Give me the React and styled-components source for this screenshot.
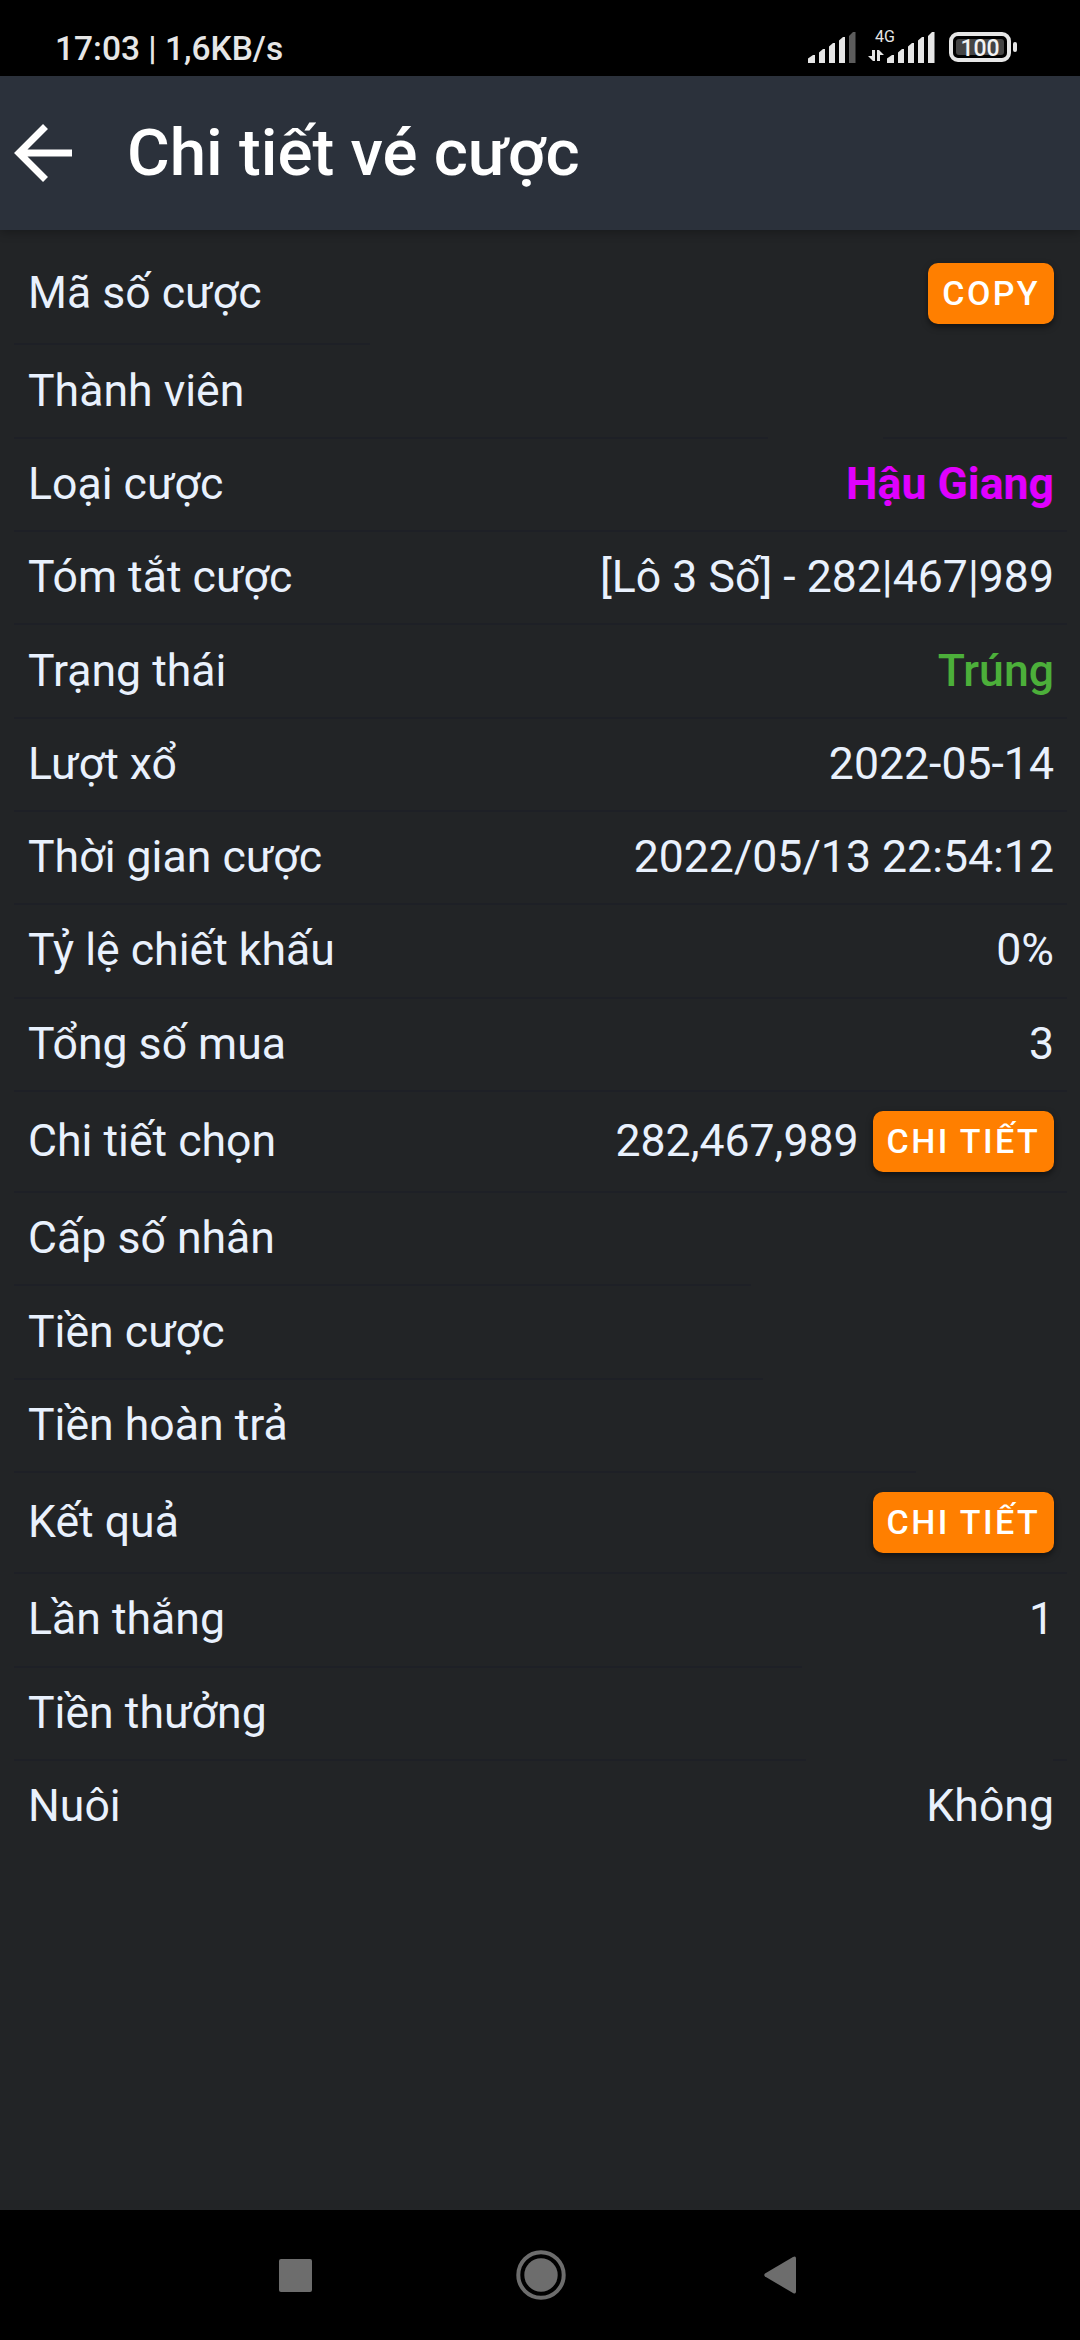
import React from 'react'
import styled, { createGlobalStyle } from 'styled-components'

const rows = [
    { label: 'Mã số cược', button: 'COPY', gap: [357, 1053] },
    { label: 'Thành viên', gap: [753, 868] },
    { label: 'Loại cược', value: 'Hậu Giang', color: '#e000ff', weight: 700 },
    { label: 'Tóm tắt cược', value: '[Lô 3 Số] - 282|467|989' },
    { label: 'Trạng thái', value: 'Trúng', color: '#4caf3a', weight: 500 },
    { label: 'Lượt xổ', value: '2022-05-14' },
    { label: 'Thời gian cược', value: '2022/05/13 22:54:12' },
    { label: 'Tỷ lệ chiết khấu', value: '0%' },
    { label: 'Tổng số mua', value: '3' },
    { label: 'Chi tiết chọn', value: '282,467,989', button: 'CHI TIẾT' },
    { label: 'Cấp số nhân', gap: [736, 1053] },
    { label: 'Tiền cược', gap: [748, 1053] },
    { label: 'Tiền hoàn trả', gap: [901, 1053] },
    { label: 'Kết quả', button: 'CHI TIẾT' },
    { label: 'Lần thắng', value: '1', gap: [787, 1052] },
    { label: 'Tiền thưởng', gap: [791, 1037] },
    { label: 'Nuôi', value: 'Không', last: true }
]

const Signal = ({ dim }) => (
    <SignalIcon viewBox="0 0 48 31" width="48" height="31">
        <path d="M0 31v-4.500l5-3.500h2v8z" />
        <path d="M11 31V20.500l4-3.500h2v14z" />
        <path d="M21 31V14.500l4-3.500h2v20z" />
        <path d="M31 31V8.500l4-3.500h2v26z" />
        <path d="M41 31V4l4-4h2.500v31z" opacity={dim ? 0.4 : 1} />
    </SignalIcon>
)

const StatusBar = () => (
    <Status>
        <Clock>17:03 | 1,6KB/s</Clock>
        <StatusIcons>
            <Signal dim />
            <Network>
                <span>4G</span>
                <svg viewBox="0 0 16 12" width="16" height="12">
                    <path d="M4 0h3v11H5L0 6h4zM9 11V0h2l5 5h-4v6z" />
                </svg>
            </Network>
            <Signal />
            <Battery><Charge>100</Charge></Battery>
            <BatteryTip />
        </StatusIcons>
    </Status>
)

export default function App() {
    return (
        <Screen>
            <GlobalStyle />
            <StatusBar />
            <Header>
                <svg viewBox="0 0 58 58" width="58" height="58" fill="none" stroke="#fff" strokeWidth="7">
                    <path d="M31.500 2.500L5 29l26.500 26.500M5 29h53" />
                </svg>
                <Title>Chi tiết vé cược</Title>
            </Header>
            <List>
                {rows.map(row => (
                    <Row key={row.label} $tall={row.button} $gap={row.gap} $last={row.last}>
                        <Label>{row.label}</Label>
                        {row.value && <Value $color={row.color} $weight={row.weight}>{row.value}</Value>}
                        {row.button && <Button>{row.button}</Button>}
                    </Row>
                ))}
            </List>
            <NavBar>
                <svg viewBox="0 0 33 33" width="33" height="33"><rect width="33" height="33" rx="2" /></svg>
                <HomeIcon viewBox="0 0 50 50" width="50" height="50">
                    <circle cx="25" cy="25" r="22.700" fill="none" stroke="#6d6d6d" strokeWidth="4" />
                    <circle cx="25" cy="25" r="16.700" />
                </HomeIcon>
                <svg viewBox="0 0 33 38" width="33" height="38">
                    <path d="M1 17.500L29 1q3-1.500 3 1.500v33q0 3-3 1.500L1 20.500q-1.500-1.500 0-3z" />
                </svg>
            </NavBar>
        </Screen>
    )
}

const GlobalStyle = createGlobalStyle`
    body {
        margin: 0;
        background: #000;
        font-family: Roboto, sans-serif;
    }
    * {
        box-sizing: border-box;
    }
    svg {
        display: block;
        flex: none;
    }
`
const Screen = styled.div`
    display: flex;
    flex-direction: column;
    width: 1080px;
    height: 2340px;
    background: #222426;
    overflow: hidden;
`
const Status = styled.div`
    display: flex;
    flex: none;
    justify-content: space-between;
    height: 76px;
    padding: 0 63px 0 55px;
    background: #000;
    color: #e6e6e6;
`
const Clock = styled.span`
    padding-top: 29px;
    font-size: 33.500px;
    font-weight: 500;
    line-height: 40px;
`
const StatusIcons = styled.div`
    display: flex;
    align-items: flex-end;
    padding-bottom: 13px;
`
const SignalIcon = styled.svg`
    fill: #e6e6e6;
`
const Network = styled.div`
    display: flex;
    flex-direction: column;
    width: 31px;
    height: 34px;
    padding-left: 12px;
    fill: #e6e6e6;
    font-size: 16px;
    line-height: 16px;

    span {
        margin-left: 7px;
        margin-bottom: 5px;
    }
`
const Battery = styled.div`
    width: 62px;
    height: 30px;
    margin-left: 14px;
    margin-bottom: 1px;
    padding: 3px;
    border: 4px solid #e6e6e6;
    border-radius: 9px;
`
const Charge = styled.div`
    height: 16px;
    border-radius: 3px;
    background: #444;
    color: #f2f2f2;
    font-size: 23px;
    font-weight: 500;
    line-height: 19px;
    text-align: center;
`
const BatteryTip = styled.div`
    width: 4px;
    height: 10px;
    margin: 0 0 11px 2px;
    border-radius: 2px;
    background: #e6e6e6;
`
const Header = styled.header`
    display: flex;
    flex: none;
    align-items: center;
    height: 154px;
    padding-left: 14px;
    background: #2b313b;
    box-shadow: 0 2px 10px rgba(0, 0, 0, 0.3);
`
const Title = styled.h1`
    margin: 0 0 0 55px;
    color: #fff;
    font-size: 65.400px;
    font-weight: 500;
    line-height: 76px;
`
const List = styled.main`
    flex: 1;
    padding: 14.200px 13px 0 14px;
`
const Row = styled.div`
    display: flex;
    align-items: center;
    height: ${prop => prop.$tall ? "101.300px" : "93.300px"};
    padding: 0 13px 0 14px;
    border-bottom: 2px solid #1e2026;
    ${prop => prop.$last && "border-bottom-color: transparent;"}
    ${prop => prop.$gap && `
        border-image: linear-gradient(to right, #1e2026 ${prop.$gap[0]}px, transparent ${prop.$gap[0]}px,
            transparent ${prop.$gap[1]}px, #1e2026 ${prop.$gap[1]}px) 2;
    `}
`
const Label = styled.span`
    margin-right: auto;
    padding-bottom: 1px;
    color: #e9f1fd;
    font-size: 44.600px;
    line-height: 52px;
`
const Value = styled.span`
    padding-bottom: 1px;
    color: ${prop => prop.$color || "#e9f1fd"};
    font-size: 44.600px;
    font-weight: ${prop => prop.$weight || 400};
    line-height: 52px;
`
const Button = styled.button`
    height: 61px;
    margin-left: 14px;
    padding: 0 14px 2px;
    border: 0;
    border-radius: 10px;
    background: #ff7f00;
    box-shadow: 0 3px 6px rgba(0, 0, 0, 0.5);
    color: #fff;
    font-family: inherit;
    font-size: 34px;
    font-weight: 500;
    letter-spacing: 2.400px;
`
const NavBar = styled.nav`
    display: flex;
    flex: none;
    align-items: center;
    justify-content: space-between;
    height: 130px;
    padding: 0 283px 0 279px;
    background: #000;
    fill: #6d6d6d;
`
const HomeIcon = styled.svg`
    margin-left: 5px;
`
